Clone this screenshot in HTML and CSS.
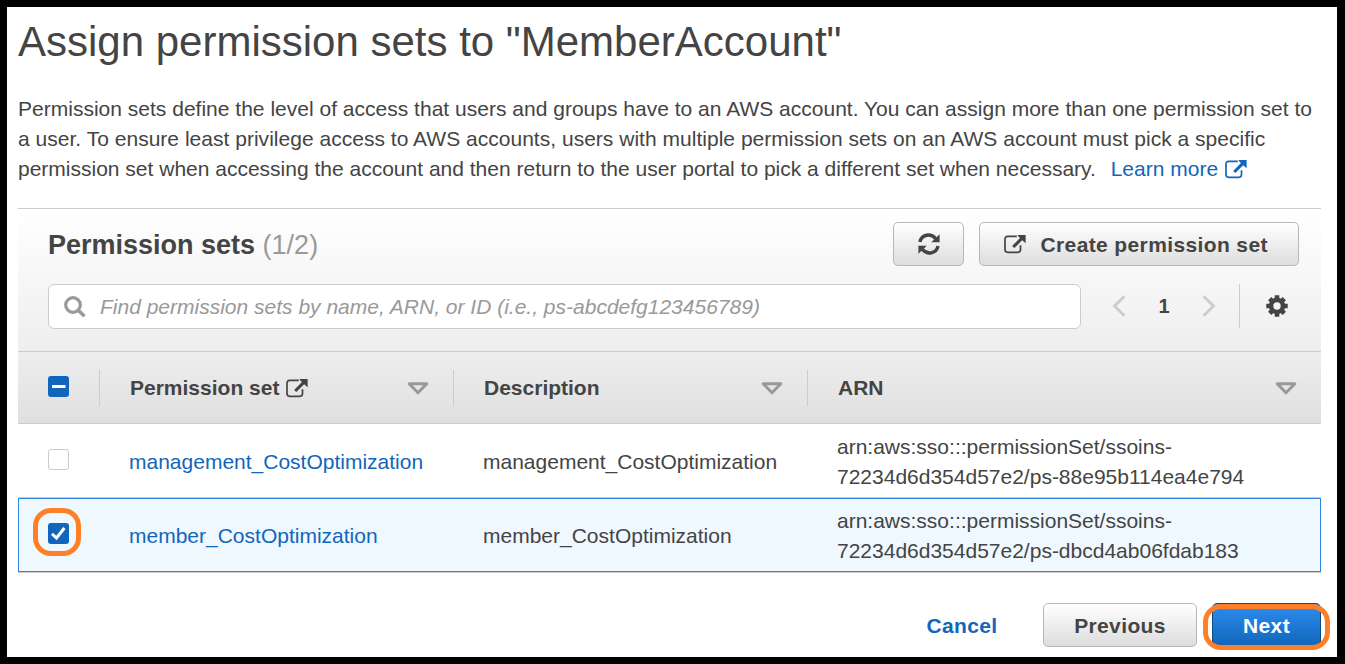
FILE: index.html
```html
<!DOCTYPE html>
<html lang="en">
<head>
<meta charset="utf-8">
<title>Assign permission sets</title>
<link rel="stylesheet" href="styles.css">
</head>
<body>
<svg class="defs" width="0" height="0">
  <symbol id="external" viewBox="0 0 22 20">
    <path d="M12.8 2.4H3.8Q1 2.4 1 5.2V15.6Q1 18.3 3.8 18.3H13.8Q16.5 18.3 16.5 15.6V11.3" fill="none" stroke="currentColor" stroke-width="1.7"/>
    <path d="M9.2 13L18.6 3.6" fill="none" stroke="currentColor" stroke-width="3.1"/>
    <path d="M13.3 1H21.6V9.2L19.6 7.6L14.8 2.9Z" fill="currentColor"/>
  </symbol>
  <symbol id="caret" viewBox="0 0 22 13">
    <path d="M2.2 1.8H19.8L11 10.8Z" fill="none" stroke="currentColor" stroke-width="3" stroke-linejoin="round"/>
  </symbol>
</svg>
<main class="page">
  <h1 class="title">Assign permission sets to "MemberAccount"</h1>
  <p class="intro"><span class="line1">Permission sets define the level of access that users and groups have to an AWS account. You can assign more than one permission set to</span><br><span class="line2">a user. To ensure least privilege access to AWS accounts, users with multiple permission sets on an AWS account must pick a specific</span><br>permission set when accessing the account and then return to the user portal to pick a different set when necessary. <a class="learn">Learn more <svg class="ext"><use href="#external"/></svg></a></p>

  <section class="panel">
    <div class="panel-head">
      <div class="bar">
        <h2 class="panel-title">Permission sets <span class="count">(1/2)</span></h2>
        <button class="btn refresh" aria-label="Refresh">
          <svg width="22" height="22" viewBox="0 0 22 22"><g fill="none" stroke="currentColor" stroke-width="3.4"><path d="M2 9C3.4 1.4 12.8-.2 17.6 5.6"/><path d="M20 13C18.6 20.6 9.2 22.2 4.4 16.4"/></g><path d="M21.6 1.3V9.2H13.2ZM.4 20.7V12.8H8.8Z" fill="currentColor"/></svg>
        </button>
        <button class="btn create"><svg class="ext"><use href="#external"/></svg><span>Create permission set</span></button>
      </div>
      <div class="bar tools">
        <div class="search">
          <svg width="22" height="22" viewBox="0 0 22 22" fill="none" stroke="currentColor"><circle cx="9" cy="9" r="7.3" stroke-width="3.2"/><path d="M14 14L20.5 20.3" stroke-width="3.6"/></svg>
          <span>Find permission sets by name, ARN, or ID (i.e., ps-abcdefg123456789)</span>
        </div>
        <div class="pager">
          <svg width="14" height="22" viewBox="0 0 14 22"><path d="M12.4 1.2L2.5 11L12.4 20.8" fill="none" stroke="currentColor" stroke-width="2.8"/></svg>
          <b class="num">1</b>
          <svg width="14" height="22" viewBox="0 0 14 22"><path d="M1.6 1.2L11.5 11L1.6 20.8" fill="none" stroke="currentColor" stroke-width="2.8"/></svg>
        </div>
        <div class="settings">
          <svg width="22" height="22" viewBox="-11 -11 22 22"><g stroke="currentColor" stroke-width="4.6"><path d="M0-10.7V-5M0 10.7V5M-10.7 0H-5M10.7 0H5"/><path d="M-7.3-7.3L-4-4M7.3 7.3L4 4M-7.3 7.3L-4 4M7.3-7.3L4-4"/></g><circle r="6" fill="none" stroke="currentColor" stroke-width="4.6"/></svg>
        </div>
      </div>
    </div>
    <div class="row header">
      <div class="cell check"><span class="box on"><svg width="21" height="21"><path d="M4 10.5H17.5" stroke="#fff" stroke-width="3"/></svg></span></div>
      <div class="cell"><b>Permission set</b><svg class="ext"><use href="#external"/></svg><svg class="caret"><use href="#caret"/></svg></div>
      <div class="cell"><b>Description</b><svg class="caret"><use href="#caret"/></svg></div>
      <div class="cell last"><b>ARN</b><svg class="caret"><use href="#caret"/></svg></div>
    </div>
  </section>
  <div class="row item">
    <div class="cell check"><span class="box"></span></div>
    <div class="cell"><a>management_CostOptimization</a></div>
    <div class="cell">management_CostOptimization</div>
    <div class="cell last">arn:aws:sso:::permissionSet/ssoins-<br>72234d6d354d57e2/ps-88e95b114ea4e794</div>
  </div>
  <div class="row item selected">
    <div class="cell check"><span class="box on"><svg width="21" height="21"><path d="M4 10.8L8.5 15L16.4 5" fill="none" stroke="#fff" stroke-width="3"/></svg><i class="mark mark-check"></i></span></div>
    <div class="cell"><a>member_CostOptimization</a></div>
    <div class="cell">member_CostOptimization</div>
    <div class="cell last">arn:aws:sso:::permissionSet/ssoins-<br>72234d6d354d57e2/ps-dbcd4ab06fdab183</div>
  </div>
  <footer class="actions">
    <a class="cancel">Cancel</a>
    <button class="btn previous">Previous</button>
    <button class="btn next">Next<i class="mark mark-next"></i></button>
  </footer>
</main>
</body>
</html>
```
FILE: styles.css
```css
* { box-sizing: border-box; }
body { margin: 0; background: #000; color: #444; font: 21px/30px "Liberation Sans", Arial, sans-serif; }
svg { display: block; flex: none; }
.defs { position: absolute; }
.page { height: 650px; margin: 7px 8px 7px 7px; padding: 11px 16px 0 11px; background: #fff; overflow: hidden; }
.title { margin: 0; font-size: 42px; line-height: 48px; font-weight: 400; white-space: nowrap; }
.intro { margin: 28px 0 0; height: 114px; white-space: nowrap; }
.line1 { letter-spacing: .01px; }
.line2 { letter-spacing: .02px; }
a { color: #1166bb; }
.learn { margin-left: 9px; }
.ext { width: 22px; height: 20px; }
.learn .ext { display: inline-block; vertical-align: -3px; margin-left: 1px; }
.panel { border-top: 1px solid #ccc; background: linear-gradient(#fff, #eee 66%, #dfdfdf); }
.panel-head { height: 143px; padding: 13px 22px 0 30px; border-bottom: 1px solid #ccc; }
.bar { display: flex; height: 44px; align-items: center; }
.panel-title { flex: 1; margin: 0; padding-top: 2px; font-size: 27px; line-height: 36px; }
.count { font-weight: 400; color: #999; }
.btn { display: flex; align-items: center; justify-content: center; height: 44px; padding: 2px 0 0; border: 1px solid #b8b8b8; border-radius: 5px; background: linear-gradient(#fff, #ddd); color: #444; font: bold 21px/30px "Liberation Sans", Arial, sans-serif; letter-spacing: .375px; }
.refresh { width: 71px; padding: 0; }
.create { justify-content: flex-start; width: 320px; margin-left: 15px; padding-left: 24px; gap: 14.5px; }
.create .ext { margin-bottom: 2px; }
.tools { margin-top: 18px; height: 45px; }
.search { display: flex; align-items: center; width: 1033px; height: 45px; padding-left: 15px; gap: 14px; border: 1px solid #ccc; border-radius: 6px; background: #fff; color: #999; font-style: italic; }
.pager { display: flex; align-items: center; justify-content: space-between; width: 104px; margin-left: 31px; padding-bottom: 2px; color: #ccc; }
.num { color: #444; font-size: 20px; }
.settings { display: flex; align-items: center; height: 44px; margin: 0 0 1px 23px; padding-left: 26px; border-left: 1px solid #ccc; }
.row { display: grid; grid-template-columns: 82px 354px 354px 1fr; }
.header { height: 72px; align-items: center; border-bottom: 1px solid #ccc; }
.header .cell { display: flex; align-items: center; height: 36px; padding: 0 24px 0 30px; border-right: 1px solid #ccc; }
.header .last { border-right: 0; }
.header b { letter-spacing: 0; }
.header .cell.check { padding: 0 0 2px 30px; }
.header .ext { margin-left: 6.5px; }
.caret { width: 22px; height: 13px; margin: 1px 0 0 auto; color: #999; }
.item { grid-template-columns: 80px 354px 354px 1fr; height: 74px; align-items: center; border: 1px solid #fff; border-bottom-color: #ccc; }
.item .cell { padding: 2px 0 0 30px; }
.item .cell.check { padding: 0 0 4px 29px; }
.selected { border-color: #3184db; background: #f0f8ff; box-shadow: 0 1px #ccc; }
.box { display: block; position: relative; width: 21px; height: 21px; border: 1px solid #ccc; border-radius: 3px; background: #fff; }
.box.on { border: 0; background: #1166bb; }
.mark { position: absolute; border: 5px solid #ff7f27; pointer-events: none; }
.mark-check { left: -15px; top: -15px; width: 48px; height: 48px; border-radius: 18px; }
.actions { display: flex; align-items: center; justify-content: flex-end; padding-top: 31px; }
.cancel { margin-right: 45.5px; padding-top: 2px; font-weight: bold; letter-spacing: .375px; }
.previous { width: 154px; }
.next { position: relative; width: 109px; margin-left: 15px; border-color: #124a7c; background: linear-gradient(#2e8df0, #1166bb); color: #fff; }
.mark-next { left: -10px; top: 0; width: 127px; height: 46px; border-radius: 18px; }
```
